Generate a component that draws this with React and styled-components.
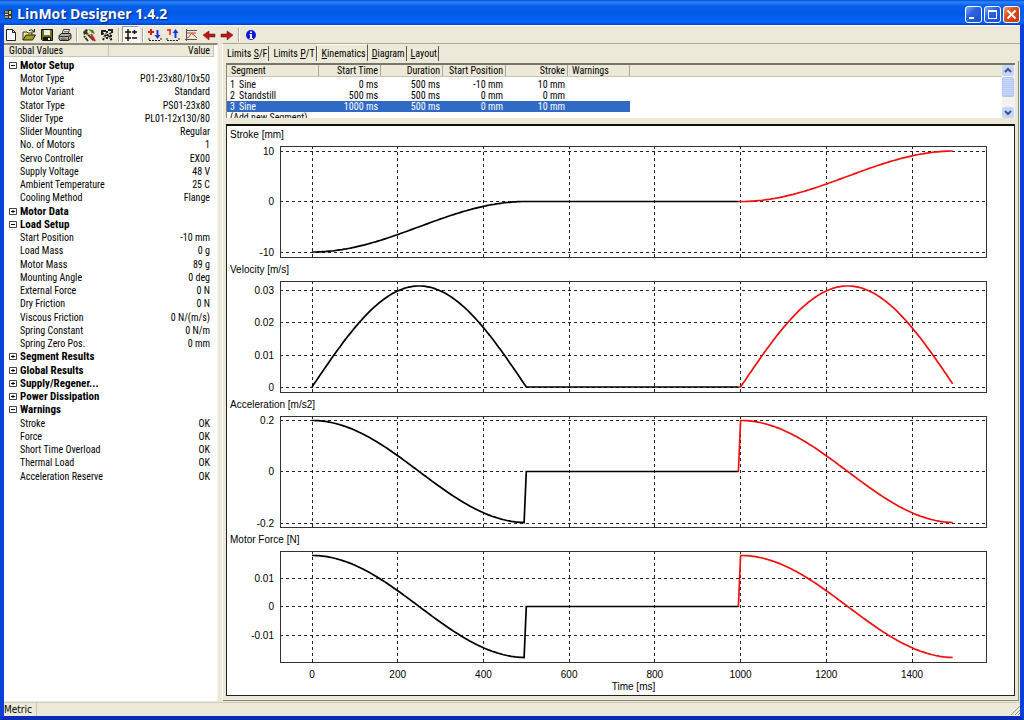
import React, { useState } from "react";
import styled, { createGlobalStyle, css } from "styled-components";

const GlobalStyle = createGlobalStyle`
  * {
    box-sizing: border-box;
  }
  body {
    margin: 0;
    background: #ece9d8;
    color: #000;
    font-family: "Roboto Condensed", Roboto, sans-serif;
    font-size: 10px;
    line-height: 13px;
  }
  button {
    font: inherit;
    color: inherit;
    border: 0;
    padding: 0;
    background: none;
  }
  table {
    border-collapse: separate;
    border-spacing: 0;
    table-layout: fixed;
  }
`;

const Window = styled.div`
  display: flex;
  flex-direction: column;
  min-height: 100vh;
  background: #ece9d8;
  border: 4px solid #0a3fd8;
  border-top: 0;
  border-bottom-color: #0a2db4;
`;

/* Title bar */
const TitleBar = styled.header`
  display: flex;
  align-items: center;
  gap: 4px;
  height: 25px;
  margin: 0 -4px;
  padding: 3px 4px 0;
  background: linear-gradient(
    #0a4ad0 0,
    #2a86fa 2px,
    #0560ea 6px,
    #0458e6 14px,
    #0465fb 22px,
    #0340c0 25px
  );
`;

const Title = styled.h1`
  flex: 1;
  margin: 0;
  color: #fff;
  font: bold 14px/18px "Open Sans", sans-serif;
  text-shadow: 1px 1px 1px #0a1f80;
`;

const WindowButtons = styled.div`
  display: flex;
  gap: 2px;
`;

const WindowButton = styled.button`
  display: flex;
  width: 17px;
  height: 17px;
  border: 1px solid #fff;
  border-radius: 3px;
  background: ${(p) =>
    p.$close
      ? "linear-gradient(135deg, #f0a080, #e04a20 40%, #c83808)"
      : "linear-gradient(135deg, #7fa8f8, #2b62e0 40%, #1a4fd0)"};
`;

/* Toolbar */
const Toolbar = styled.div`
  display: flex;
  align-items: center;
  gap: 4px;
  height: 18px;
  border-top: 1px solid #fff;
`;

const ToolButton = styled.button`
  display: flex;
  width: 14px;
  height: 14px;
  ${(p) =>
    p.$pressed &&
    css`
      background: #f8f7f1;
      box-shadow: 0 0 0 1px #f8f7f1, -1px -1px 0 1px #9d9a8c, 1px 1px 0 1px #fff;
    `}
`;

const ToolSeparator = styled.span`
  width: 2px;
  height: 14px;
  border-left: 1px solid #aca899;
  border-right: 1px solid #fff;
`;

const Main = styled.main`
  display: flex;
  flex: 1;
`;

/* Global values */
const Sidebar = styled.section`
  width: 214px;
  border-top: 2px solid #8d8a7c;
  border-right: 1px solid #f6f4ea;
  background: #fff;
`;

const ValueTable = styled.table`
  width: 210px;
  th {
    height: 12px;
    padding: 0 5px;
    background: #ece9d8;
    border-right: 1px solid #c6c3b2;
    border-bottom: 1px solid #c6c3b2;
    font-weight: normal;
    line-height: 11px;
    text-align: left;
  }
  th + th {
    padding: 0 3px;
    text-align: right;
  }
`;

const ValueRow = styled.tr`
  td {
    height: 13px;
    padding: 0;
    white-space: nowrap;
  }
  &:nth-child(4n) td {
    height: 14px;
  }
  &:first-child td {
    height: 15px;
    padding-top: 2px;
  }
`;

const NameCell = styled.td`
  && {
    padding-left: 16px;
  }
`;

const ValueCell = styled.td`
  && {
    padding-right: 4px;
    text-align: right;
  }
`;

const GroupButton = styled.button`
  display: flex;
  align-items: center;
  gap: 3px;
  padding-left: 5px;
  font-size: 11px;
  font-weight: bold;
`;

/* Tabs */
const Workspace = styled.section`
  display: flex;
  flex: 1;
  flex-direction: column;
  min-width: 0;
  margin-left: 4px;
  border-top: 1px solid #aca899;
  border-left: 1px solid #fff;
`;

const TabList = styled.div`
  display: flex;
  align-items: flex-end;
  height: 17px;
`;

const Tab = styled.button`
  height: 15px;
  padding: 0 1px 0 4px;
  border-right: 1px solid #555248;
  line-height: 15px;
  ${(p) =>
    p.$active &&
    css`
      height: 17px;
      border-left: 1px solid #fff;
      border-top: 1px solid #fff;
      line-height: 13px;
    `}
`;

const TabPage = styled.div`
  display: flex;
  flex: 1;
  flex-direction: column;
  gap: 6px;
  margin-right: 1px;
  padding: 2px 3px 4px;
  border-right: 1px solid #8d8a7c;
  border-bottom: 1px solid #8d8a7c;
`;

/* Segments */
const SegmentBox = styled.div`
  display: flex;
  height: 55px;
  border-top: 2px solid #77756a;
  border-left: 1px solid #8d8a7c;
  background: #fff;
`;

const SegmentScroll = styled.div`
  flex: 1;
  overflow: hidden;
  background: linear-gradient(#ece9d8 11px, #c6c3b2 11px, #c6c3b2 12px, #fff 12px);
`;

const SegmentTable = styled.table`
  width: 403px;
  th {
    height: 14px;
    padding: 0 3px 2px;
    font-weight: normal;
    line-height: 12px;
    text-align: right;
    white-space: nowrap;
    background: linear-gradient(#aca899, #aca899) right top / 1px 11px no-repeat;
  }
  th:first-child,
  th:last-child {
    padding-left: 4px;
    text-align: left;
  }
`;

const SegmentRow = styled.tr`
  background: ${(p) => (p.$selected ? "#316ac5" : "transparent")};
  color: ${(p) => (p.$selected ? "#fff" : "#000")};
  td {
    height: 11px;
    padding: 0 3px;
    line-height: 11px;
    text-align: right;
    white-space: nowrap;
  }
  td:first-child {
    text-align: left;
  }
`;

const SegmentNumber = styled.span`
  display: inline-block;
  width: 9px;
`;

const ScrollBar = styled.div`
  display: flex;
  flex-direction: column;
  width: 13px;
  background: #f3f2ec;
`;

const ScrollButton = styled.button`
  display: flex;
  width: 12px;
  height: 11px;
  border-radius: 2px;
  background: #c6d5fb;
`;

const ScrollThumb = styled.div`
  width: 12px;
  height: 20px;
  margin: 1px 0 auto;
  border: 1px solid #b0c4f5;
  border-radius: 2px;
  background: repeating-linear-gradient(#c8d6fb 0 1px, #b9cbf8 1px 2px);
`;

/* Charts */
const ChartPanel = styled.div`
  flex: 1;
  padding: 0 1px 0;
  border: 1px solid #222;
  border-top: 2px solid #111;
  background: #fff;
  font-family: "Liberation Sans", sans-serif;
`;

const Chart = styled.figure`
  margin: 0;
`;

const ChartTitle = styled.figcaption`
  height: 16px;
  padding-left: 2px;
  line-height: 18px;
`;

const Plot = styled.svg`
  display: block;
  width: 100%;
  text {
    font-family: "Liberation Sans", sans-serif;
    font-size: 10px;
  }
`;

const AxisTitle = styled.div`
  padding-left: 26px;
  line-height: 14px;
  text-align: center;
`;

const StatusBar = styled.footer`
  display: flex;
  height: 14px;
  margin-top: 1px;
  border-top: 1px solid #d0cdbc;
  font: 10px/14px "DejaVu Sans Condensed", sans-serif;
`;

const StatusText = styled.span`
  flex: 1;
`;

const StatusCell = styled.span`
  width: 33px;
  border-right: 1px solid #c6c3b2;
`;

const GROUPS = [
  {
    name: "Motor Setup",
    open: true,
    rows: [
      ["Motor Type", "P01-23x80/10x50"],
      ["Motor Variant", "Standard"],
      ["Stator Type", "PS01-23x80"],
      ["Slider Type", "PL01-12x130/80"],
      ["Slider Mounting", "Regular"],
      ["No. of Motors", "1"],
      ["Servo Controller", "EX00"],
      ["Supply Voltage", "48 V"],
      ["Ambient Temperature", "25 C"],
      ["Cooling Method", "Flange"],
    ],
  },
  { name: "Motor Data", rows: [] },
  {
    name: "Load Setup",
    open: true,
    rows: [
      ["Start Position", "-10 mm"],
      ["Load Mass", "0 g"],
      ["Motor Mass", "89 g"],
      ["Mounting Angle", "0 deg"],
      ["External Force", "0 N"],
      ["Dry Friction", "0 N"],
      ["Viscous Friction", "0 N/(m/s)"],
      ["Spring Constant", "0 N/m"],
      ["Spring Zero Pos.", "0 mm"],
    ],
  },
  { name: "Segment Results", rows: [] },
  { name: "Global Results", rows: [] },
  { name: "Supply/Regener...", rows: [] },
  { name: "Power Dissipation", rows: [] },
  {
    name: "Warnings",
    open: true,
    rows: [
      ["Stroke", "OK"],
      ["Force", "OK"],
      ["Short Time Overload", "OK"],
      ["Thermal Load", "OK"],
      ["Acceleration Reserve", "OK"],
    ],
  },
];

// [text before the access key, access key, text after it]
const TABS = [
  ["Limits ", "S", "/F"],
  ["Limits ", "P", "/T"],
  ["", "K", "inematics"],
  ["", "D", "iagram"],
  ["", "L", "ayout"],
];

const SEGMENTS = [
  ["Sine", "0 ms", "500 ms", "-10 mm", "10 mm"],
  ["Standstill", "500 ms", "500 ms", "0 mm", "0 mm"],
  ["Sine", "1000 ms", "500 ms", "0 mm", "10 mm"],
];

const TIMES = [0, 200, 400, 600, 800, 1000, 1200, 1400];

// Sine move: rest, half a cosine of travel, rest
const phase = (t) => (Math.PI * (t % 500)) / 500;
const moving = (t) => t < 500 || t >= 1000;
const cosine = (t) => (moving(t) ? Math.cos(phase(t)) : 0);

function stroke(t) {
  if (!moving(t)) return 0;
  const travel = 5 - 5 * Math.cos(phase(t));
  return t < 500 ? travel - 10 : travel;
}

const CHARTS = [
  {
    title: "Stroke [mm]",
    ticks: [["10", 9], ["0", 59], ["-10", 110]],
    y: (t) => 59.5 - stroke(t) * 5.05,
  },
  {
    title: "Velocity [m/s]",
    ticks: [["0.03", 13], ["0.02", 45], ["0.01", 78], ["0", 110]],
    y: (t) => 110 - (moving(t) ? Math.sin(phase(t)) * 101 : 0),
  },
  {
    title: "Acceleration [m/s2]",
    ticks: [["0.2", 8], ["0", 59], ["-0.2", 111]],
    y: (t) => 59.5 - cosine(t) * 51,
  },
  {
    title: "Motor Force [N]",
    ticks: [["0.01", 31], ["0", 59], ["-0.01", 88]],
    y: (t) => 59.5 - cosine(t) * 51,
  },
];

const timeX = (t) => 84 + (t * 3) / 7;

function curve(y, from, to) {
  const points = [];
  for (let t = from; t <= to; t += 5) {
    points.push(`${timeX(t).toFixed(1)},${y(t).toFixed(1)}`);
  }
  return points.join(" ");
}

function MotionChart({ title, ticks, y }) {
  return (
    <Chart>
      <ChartTitle>{title}</ChartTitle>
      <Plot viewBox="0 0 785 119" role="img" aria-label={title}>
        <g stroke="#222" strokeDasharray="3 3" shapeRendering="crispEdges">
          {TIMES.map((t) => (
            <line
              key={t}
              x1={Math.floor(timeX(t)) + 0.5}
              x2={Math.floor(timeX(t)) + 0.5}
              y1="4"
              y2="115"
            />
          ))}
          {ticks.map(([label, at]) => (
            <line key={label} x1="52" x2="759" y1={at + 0.5} y2={at + 0.5} />
          ))}
        </g>
        <rect
          x="52.5"
          y="4.5"
          width="706"
          height="111"
          fill="none"
          stroke="#333"
          shapeRendering="crispEdges"
        />
        {ticks.map(([label, at]) => (
          <text key={label} x="46" y={at + 4} textAnchor="end">
            {label}
          </text>
        ))}
        <g fill="none" strokeWidth="1.7">
          <polyline points={curve(y, 0, 995)} stroke="#000" />
          <polyline points={curve(y, 995, 1495)} stroke="#f01010" />
        </g>
      </Plot>
    </Chart>
  );
}

const ICONS = {
  New: (
    <path d="M2.5 1.5h6l3 3v8h-9zM8.5 1.5v3h3" fill="#fff" stroke="#222" />
  ),
  Open: (
    <>
      <path d="M1 12V4h4l1 1h4v2" fill="#f4e98c" stroke="#333" />
      <path d="M1 12l3-5h9.500l-3 5z" fill="#a8a014" stroke="#222" />
      <path d="M7 2.500q3-2 5 1M12.500 1v3h-3" fill="none" stroke="#222" />
    </>
  ),
  Save: (
    <>
      <path d="M1.500 1.500h11v11h-10l-1-1z" fill="#6e7318" stroke="#111" />
      <path d="M4 2h6v5H4z" fill="#efeee2" />
      <path d="M3 9h8v4H3z" fill="#111" />
      <path d="M8 10h2v2H8z" fill="#eee" />
    </>
  ),
  Print: (
    <>
      <path d="M4 6l1.500-4.500h6L10 6" fill="#fff" stroke="#333" />
      <path d="M6 3.500h4M5.500 5h4" stroke="#777" />
      <path d="M1 7.500L3.500 5.500h9l.5 2v3l-2.500 2H2l-1-2z" fill="#aaa" stroke="#222" />
      <path d="M1 8.500h9.500L13 7M10.500 8.500v4M3 11h6" fill="none" stroke="#333" />
      <path d="M7.500 10h2" stroke="#ddd000" />
    </>
  ),
  Tools: (
    <>
      <path d="M1 4l3-3 2 1-1 2 7 8-1 1-7-7-2 1z" fill="#333" />
      <path d="M2 8l4 5" stroke="#333" strokeWidth="2" />
      <path d="M6 1l5 1 2 4-3-1-2-2z" fill="#3a8a28" />
      <path d="M9 6l4 7" stroke="#d0201c" strokeWidth="2" />
      <path d="M8 4l-5 6" stroke="#e0cc10" />
    </>
  ),
  Optimize: (
    <>
      <path d="M1 2h5v2H3v3H1zM8 1h5v4h-2V3H8z" fill="#222" />
      <path
        d="M2 5l5 3 4-3M7 3v9M3 12l2-4M9 8l3 5M11 7v4"
        fill="none"
        stroke="#222"
        strokeWidth="2"
        strokeDasharray="2 1"
      />
      <path d="M5 5h2v2H5zM9 9h2v2H9zM3 8h2v1H3z" fill="#888" />
    </>
  ),
  "Global Values": (
    <path
      d="M1 4h6M4 1v12M1 10h6M8 4h5M10.500 2v4M8 10h5"
      stroke="#111"
      strokeWidth="1.500"
    />
  ),
  "Add Segment": (
    <>
      <path d="M0 4h6M3 1v6" stroke="#e01818" strokeWidth="2" />
      <path d="M9.500 2v7" stroke="#1838e0" strokeWidth="2" />
      <path d="M6.500 7h6l-3 4z" fill="#1838e0" />
      <path d="M1 10v3M1 12.500h12M13 10v3" stroke="#222" strokeDasharray="2 1" />
    </>
  ),
  "Remove Segment": (
    <>
      <path d="M1 2h3M4 1v6" stroke="#e01818" strokeWidth="1.500" />
      <path d="M9.500 4v6" stroke="#1838e0" strokeWidth="2" />
      <path d="M6.500 5h6l-3-4z" fill="#1838e0" />
      <path d="M1 10v3M1 12.500h12M13 10v3" stroke="#222" strokeDasharray="2 1" />
    </>
  ),
  "Show Curve": (
    <>
      <path d="M2.500 1v12M1 11.500h12M3 2.500h10" stroke="#555" fill="none" />
      <path d="M3 10q2 0 3-3t4 0l3 3M3 5h9" fill="none" stroke="#b04440" />
    </>
  ),
  Back: (
    <path d="M1 7l6-4v3h6v3H7v3z" fill="#c01418" stroke="#50100c" strokeWidth="0.500" />
  ),
  Forward: (
    <path d="M13 7L7 3v3H1v3h6v3z" fill="#c01418" stroke="#50100c" strokeWidth="0.500" />
  ),
  About: (
    <>
      <circle cx="7" cy="7" r="5" fill="#1018e0" />
      <path d="M6 3.500h2v1.500H6zM5.500 6H8v4h1v1H5.500v-1H6V7h-.5z" fill="#fff" />
    </>
  ),
};

const TOOL_GROUPS = [
  ["New", "Open", "Save", "Print"],
  ["Tools", "Optimize"],
  ["Global Values"],
  ["Add Segment", "Remove Segment", "Show Curve", "Back", "Forward"],
  ["About"],
];

function Tools() {
  return (
    <Toolbar role="toolbar">
      {TOOL_GROUPS.map((names, i) => (
        <React.Fragment key={names[0]}>
          {i > 0 && <ToolSeparator />}
          {names.map((name) => (
            <ToolButton
              key={name}
              type="button"
              aria-label={name}
              $pressed={name === "Global Values"}
            >
              <svg width="14" height="14" viewBox="0 0 14 14">
                {ICONS[name]}
              </svg>
            </ToolButton>
          ))}
        </React.Fragment>
      ))}
    </Toolbar>
  );
}

function GlobalValues() {
  const [open, setOpen] = useState(GROUPS.map((g) => Boolean(g.open)));

  function toggle(index) {
    setOpen(open.map((value, i) => (i === index ? !value : value)));
  }

  return (
    <Sidebar>
      <ValueTable>
        <thead>
          <tr>
            <th>Global Values</th>
            <th>Value</th>
          </tr>
        </thead>
        <tbody>
          {GROUPS.map((group, i) => (
            <React.Fragment key={group.name}>
              <ValueRow>
                <td colSpan="2">
                  <GroupButton
                    type="button"
                    aria-expanded={open[i]}
                    onClick={() => toggle(i)}
                  >
                    <svg width="8" height="9" viewBox="0 0 8 9">
                      <path d="M.5 1.500h7v6h-7z" fill="#fff" stroke="#444" />
                      <path
                        d={open[i] ? "M2 4.500h4" : "M2 4.500h4M4 3v3"}
                        stroke="#000"
                      />
                    </svg>
                    {group.name}
                  </GroupButton>
                </td>
              </ValueRow>
              {open[i] &&
                group.rows.map(([name, value]) => (
                  <ValueRow key={name}>
                    <NameCell>{name}</NameCell>
                    <ValueCell>{value}</ValueCell>
                  </ValueRow>
                ))}
            </React.Fragment>
          ))}
        </tbody>
      </ValueTable>
    </Sidebar>
  );
}

function SegmentList() {
  const [selected, setSelected] = useState(2);

  return (
    <SegmentBox>
      <SegmentScroll>
        <SegmentTable>
          <colgroup>
            <col width="92" />
            <col width="62" />
            <col width="62" />
            <col width="63" />
            <col width="62" />
            <col width="62" />
          </colgroup>
          <thead>
            <tr>
              <th>Segment</th>
              <th>Start Time</th>
              <th>Duration</th>
              <th>Start Position</th>
              <th>Stroke</th>
              <th>Warnings</th>
            </tr>
          </thead>
          <tbody>
            {SEGMENTS.map(([name, ...values], i) => (
              <SegmentRow
                key={i}
                $selected={i === selected}
                onClick={() => setSelected(i)}
              >
                <td>
                  <SegmentNumber>{i + 1}</SegmentNumber>
                  {name}
                </td>
                {values.map((value, n) => (
                  <td key={n}>{value}</td>
                ))}
                <td />
              </SegmentRow>
            ))}
            <SegmentRow>
              <td colSpan="6">(Add new Segment)</td>
            </SegmentRow>
          </tbody>
        </SegmentTable>
      </SegmentScroll>
      <ScrollBar>
        <ScrollButton type="button" aria-label="Scroll up">
          <svg width="12" height="11" viewBox="0 0 12 11">
            <path d="M3 7l3-3 3 3" fill="none" stroke="#3f5585" strokeWidth="2" />
          </svg>
        </ScrollButton>
        <ScrollThumb />
        <ScrollButton type="button" aria-label="Scroll down">
          <svg width="12" height="11" viewBox="0 0 12 11">
            <path d="M3 4l3 3 3-3" fill="none" stroke="#3f5585" strokeWidth="2" />
          </svg>
        </ScrollButton>
      </ScrollBar>
    </SegmentBox>
  );
}

function App() {
  const [tab, setTab] = useState(2);

  return (
    <Window>
      <GlobalStyle />
      <TitleBar>
        <svg width="9" height="11" viewBox="0 0 9 11">
          <path d="M0 2l8-2v10H1z" fill="#333" />
          <path d="M1 3h3M1 5.500h3M1 8h3" stroke="#eee" />
          <path d="M5 2h2v3H5zM5 7h2v2H5z" fill="#d8c860" />
        </svg>
        <Title>LinMot Designer 1.4.2</Title>
        <WindowButtons>
          <WindowButton type="button" aria-label="Minimize">
            <svg width="15" height="15" viewBox="0 0 15 15">
              <path d="M3 10h5v2H3z" fill="#fff" />
            </svg>
          </WindowButton>
          <WindowButton type="button" aria-label="Maximize">
            <svg width="15" height="15" viewBox="0 0 15 15">
              <path d="M3 3h9v9H3zM4 5v6h7V5z" fill="#fff" fillRule="evenodd" />
            </svg>
          </WindowButton>
          <WindowButton type="button" aria-label="Close" $close>
            <svg width="15" height="15" viewBox="0 0 15 15">
              <path d="M3.500 3.500l8 8M11.500 3.500l-8 8" stroke="#fff" strokeWidth="2" />
            </svg>
          </WindowButton>
        </WindowButtons>
      </TitleBar>
      <Tools />
      <Main>
        <GlobalValues />
        <Workspace>
          <TabList role="tablist">
            {TABS.map(([before, accessKey, after], i) => (
              <Tab
                key={i}
                type="button"
                role="tab"
                aria-selected={i === tab}
                $active={i === tab}
                onClick={() => setTab(i)}
              >
                {before}
                <u>{accessKey}</u>
                {after}
              </Tab>
            ))}
          </TabList>
          <TabPage>
            <SegmentList />
            <ChartPanel>
              {CHARTS.map((chart) => (
                <MotionChart key={chart.title} {...chart} />
              ))}
              <Plot viewBox="0 0 785 14" aria-hidden="true">
                {TIMES.map((t) => (
                  <text key={t} x={timeX(t)} y="12" textAnchor="middle">
                    {t}
                  </text>
                ))}
              </Plot>
              <AxisTitle>Time [ms]</AxisTitle>
            </ChartPanel>
          </TabPage>
        </Workspace>
      </Main>
      <StatusBar>
        <StatusCell>Metric</StatusCell>
        <StatusText />
        <svg width="10" height="12" viewBox="0 0 10 12">
          <path d="M1 12l9-9M5 12l5-5M8 12l2-2" stroke="#9a9788" />
        </svg>
      </StatusBar>
    </Window>
  );
}

export default App;
